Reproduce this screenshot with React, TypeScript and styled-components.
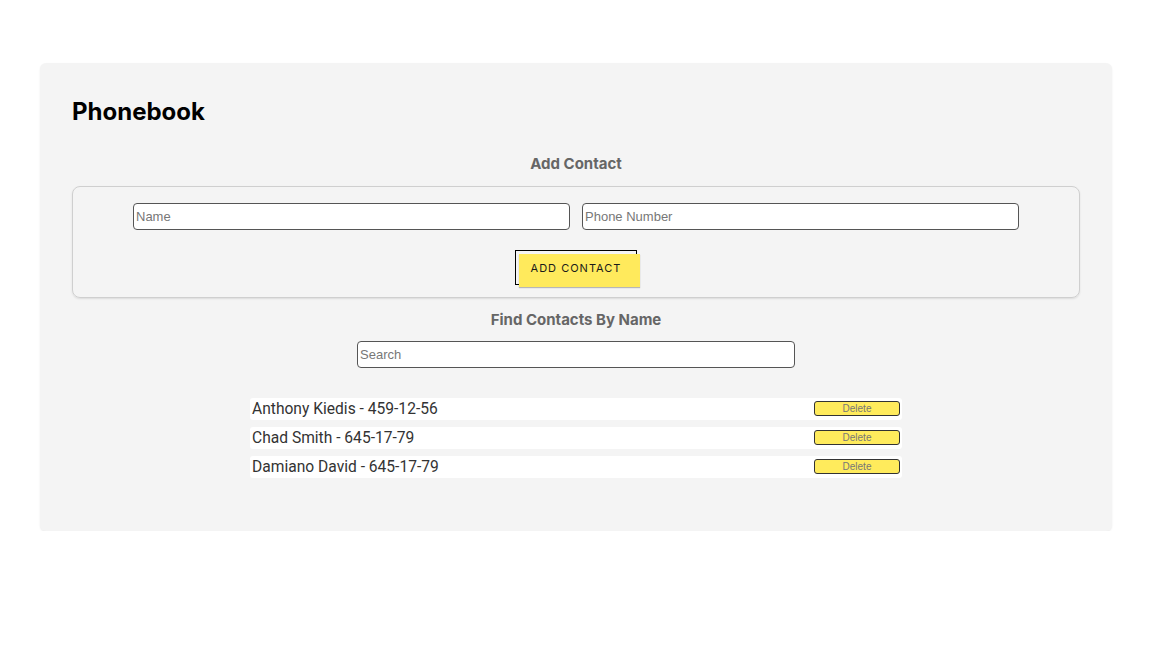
import React, { useState } from 'react';
import styled, { createGlobalStyle } from 'styled-components';

const GlobalStyle = createGlobalStyle`
  html, body {
    margin: 0;
    padding: 0;
    background: #ffffff;
  }
  body {
    font-family: Roboto, "Liberation Sans", Arial, sans-serif;
    color: #333;
  }
  * {
    box-sizing: border-box;
  }
`;

const Page = styled.div`
  padding: 63px 49px 0 40px;
`;

const Card = styled.main`
  width: 1072px;
  height: 468px;
  background-color: #f4f4f4;
  border-radius: 6px;
  box-shadow: 0 1px 2px rgba(0, 0, 0, 0.08);
  padding: 32px 32px 0;
`;

const Title = styled.h1`
  margin: 2px 0 0;
  font-family: Inter, Roboto, sans-serif;
  font-size: 24px;
  line-height: 29px;
  font-weight: 700;
  color: #000;
`;

const SectionTitle = styled.h2<{ $top: number }>`
  margin: ${({ $top }) => $top}px 0 0;
  text-align: center;
  font-family: Inter, Roboto, sans-serif;
  font-size: 15px;
  line-height: 18px;
  font-weight: 700;
  color: #666;
`;

const FormBox = styled.form`
  margin-top: 13px;
  border: 1px solid #cfcfcf;
  border-radius: 8px;
  box-shadow: 0 1px 2px rgba(0, 0, 0, 0.1);
  padding: 16px 0 12px;
  display: flex;
  flex-direction: column;
  align-items: center;
`;

const InputRow = styled.div`
  display: flex;
  gap: 12px;
  justify-content: center;
`;

const TextInput = styled.input<{ $width: number }>`
  width: ${({ $width }) => $width}px;
  height: 27px;
  padding: 1px 2px;
  border: 1px solid #555;
  border-radius: 4px;
  background: #fff;
  font-family: "Liberation Sans", Arial, sans-serif;
  font-size: 13px;
  color: #222;

  &::placeholder {
    color: #777;
  }

  &:focus {
    outline: none;
  }
`;

const ButtonFrame = styled.div`
  margin-top: 20px;
  width: 122px;
  height: 35px;
  border: 1px solid #000;
`;

const AddButton = styled.button`
  display: block;
  width: 121px;
  height: 33px;
  margin: 0;
  border: none;
  background-color: #ffea5c;
  box-shadow: 0 1px 1px rgba(0, 0, 0, 0.25);
  transform: translate(3px, 3px);
  font-family: Inter, Roboto, sans-serif;
  font-size: 11px;
  font-weight: 400;
  letter-spacing: 1px;
  color: #1a1a1a;
  padding: 0 7px 6px 0;
  cursor: pointer;
`;

const SearchWrap = styled.div`
  margin-top: 12px;
  display: flex;
  justify-content: center;
`;

const List = styled.ul`
  list-style: none;
  width: 652px;
  margin: 30px auto 0;
  padding: 0;
  display: flex;
  flex-direction: column;
  gap: 7.5px;
`;

const Row = styled.li`
  height: 21.5px;
  background: #fff;
  border-radius: 3px;
  padding: 0 2px;
  display: flex;
  align-items: center;
  justify-content: space-between;
  font-size: 15.6px;
  color: #333;
`;

const DeleteButton = styled.button`
  width: 86px;
  height: 15px;
  padding: 0;
  border: 1px solid #333;
  border-radius: 3px;
  background-color: #ffeb5c;
  font-family: "Liberation Sans", Arial, sans-serif;
  font-size: 10px;
  line-height: 13px;
  color: #777;
  cursor: pointer;
`;

type Contact = { id: number; name: string; number: string };

const initialContacts: Contact[] = [
  { id: 1, name: 'Anthony Kiedis', number: '459-12-56' },
  { id: 2, name: 'Chad Smith', number: '645-17-79' },
  { id: 3, name: 'Damiano David', number: '645-17-79' },
];

export default function App() {
  const [contacts, setContacts] = useState<Contact[]>(initialContacts);
  const [name, setName] = useState('');
  const [number, setNumber] = useState('');
  const [filter, setFilter] = useState('');

  const handleSubmit = (e: React.FormEvent) => {
    e.preventDefault();
    if (!name || !number) return;
    setContacts((prev) => [...prev, { id: Date.now(), name, number }]);
    setName('');
    setNumber('');
  };

  const visible = contacts.filter((c) =>
    c.name.toLowerCase().includes(filter.toLowerCase())
  );

  return (
    <>
      <GlobalStyle />
      <Page>
        <Card>
          <Title>Phonebook</Title>
          <SectionTitle $top={29}>Add Contact</SectionTitle>
          <FormBox onSubmit={handleSubmit}>
            <InputRow>
              <TextInput
                $width={437}
                placeholder="Name"
                value={name}
                onChange={(e) => setName(e.target.value)}
              />
              <TextInput
                $width={437}
                placeholder="Phone Number"
                value={number}
                onChange={(e) => setNumber(e.target.value)}
              />
            </InputRow>
            <ButtonFrame>
              <AddButton type="submit">ADD CONTACT</AddButton>
            </ButtonFrame>
          </FormBox>
          <SectionTitle $top={13}>Find Contacts By Name</SectionTitle>
          <SearchWrap>
            <TextInput
              $width={438}
              placeholder="Search"
              value={filter}
              onChange={(e) => setFilter(e.target.value)}
            />
          </SearchWrap>
          <List>
            {visible.map((c) => (
              <Row key={c.id}>
                <span>
                  {c.name} - {c.number}
                </span>
                <DeleteButton
                  type="button"
                  onClick={() => setContacts((prev) => prev.filter((p) => p.id !== c.id))}
                >
                  Delete
                </DeleteButton>
              </Row>
            ))}
          </List>
        </Card>
      </Page>
    </>
  );
}
